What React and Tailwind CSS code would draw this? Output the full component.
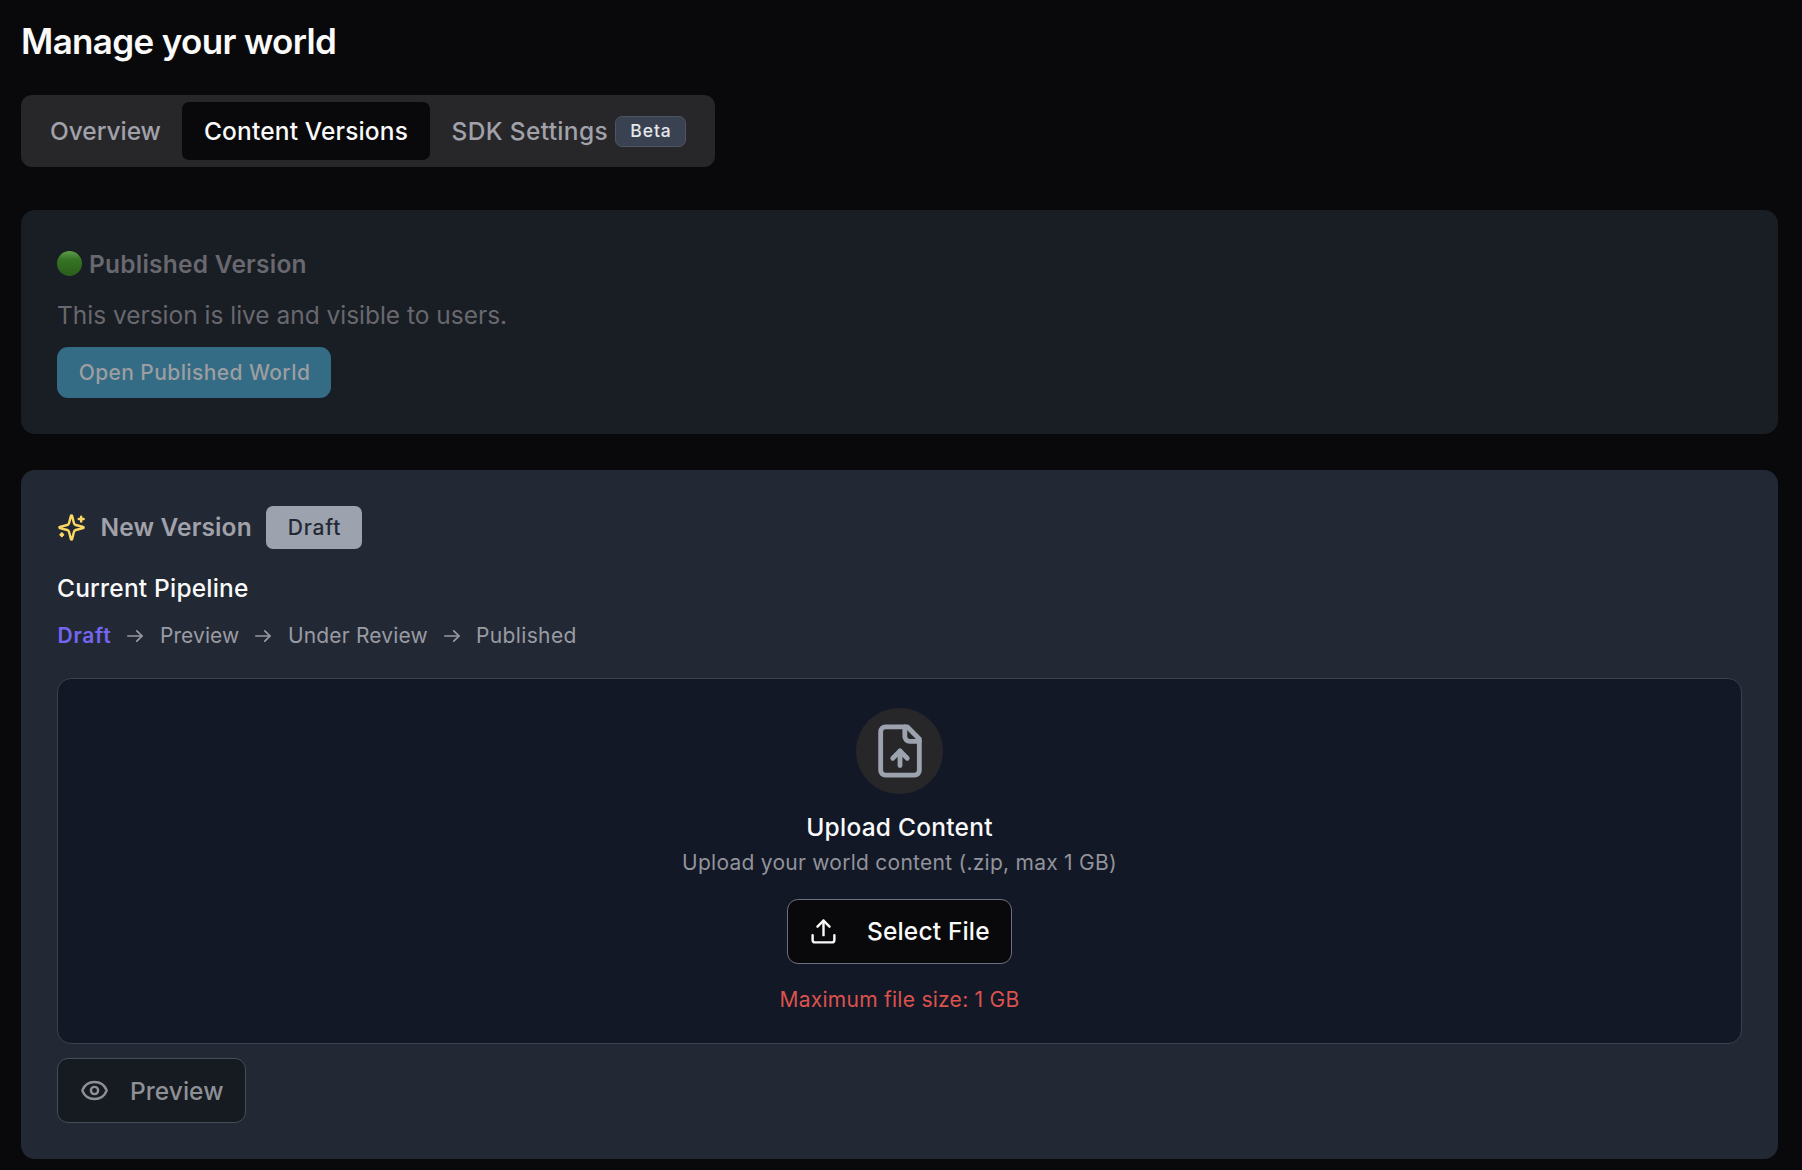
import React from "react";
import { Eye, Upload } from "lucide-react";

function SparklesIcon() {
  return (
    <svg className="h-[29px] w-[29px] text-[#fbd960]" viewBox="0 0 24 24" fill="none" stroke="currentColor" strokeWidth="2" strokeLinecap="round" strokeLinejoin="round">
      <path d="M9.937 15.5A2 2 0 0 0 8.5 14.063l-6.135-1.582a.5.5 0 0 1 0-.962L8.5 9.936A2 2 0 0 0 9.937 8.5l1.582-6.135a.5.5 0 0 1 .963 0L14.063 8.5A2 2 0 0 0 15.5 9.937l6.135 1.581a.5.5 0 0 1 0 .964L15.5 14.063a2 2 0 0 0-1.437 1.437l-1.582 6.135a.5.5 0 0 1-.963 0z" />
      <path d="M20 3v4" />
      <path d="M22 5h-4" />
      <path d="M4 17v2" />
      <path d="M5 18H3" />
    </svg>
  );
}

function FileUpIcon() {
  return (
    <svg className="h-[58px] w-[58px] text-[#9da2af]" viewBox="0 0 24 24" fill="none" stroke="currentColor" strokeWidth="2" strokeLinecap="round" strokeLinejoin="round">
      <path d="M15 2H6a2 2 0 0 0-2 2v16a2 2 0 0 0 2 2h12a2 2 0 0 0 2-2V7Z" />
      <path d="M14 2v4a2 2 0 0 0 2 2h4" />
      <path d="M12 12v6" />
      <path d="m15 15-3-3-3 3" />
    </svg>
  );
}

function StepArrow() {
  return (
    <svg className="mx-[17px] h-[14px] w-[16px] shrink-0" viewBox="0 0 16 14" fill="none" stroke="currentColor" strokeWidth="1.7" strokeLinecap="round" strokeLinejoin="round">
      <path d="M.9 7h14" />
      <path d="m9.8 1.8 5.2 5.2-5.2 5.2" />
    </svg>
  );
}

function Tabs() {
  return (
    <nav className="mt-8 flex h-[72px] w-[694px] rounded-[11px] bg-[#27272a] p-[7px] text-[24.5px] font-medium text-[#a1a1aa]">
      <button className="flex w-[154px] items-center pl-[22px] tracking-[-0.04px]">Overview</button>
      <button className="flex w-[248px] items-center rounded-[7px] bg-[#09090b] pl-[22px] tracking-[0.15px] text-[#fafafa]">Content Versions</button>
      <button className="flex w-[278px] items-center pl-[21.5px] tracking-[0.34px]">
        <span className="w-[163.5px] text-left">SDK Settings</span>
        <span className="flex h-[31px] w-[71px] items-center justify-center rounded-[7px] border border-[#4b5565] bg-[#3a4151] pl-px text-[17.5px] tracking-[0.9px] text-[#e5e7eb]">Beta</span>
      </button>
    </nav>
  );
}

function PublishedCard() {
  return (
    <section className="mt-[43px] h-[224px] rounded-[14px] bg-[#191d24] p-9 text-[#68686e]">
      <h2 className="flex h-9 items-center text-[24.5px] font-semibold tracking-[0.24px]">
        <span className="mr-[7px] mb-px h-[25px] w-[25px] rounded-full bg-linear-to-b from-[#5c9d4b] via-[#357323] via-35% to-[#2b5e1c]" />
        Published Version
      </h2>
      <p className="mt-[15px] text-[24.5px] leading-9 tracking-[-0.02px]">This version is live and visible to users.</p>
      <button className="mt-[14px] flex h-[51px] w-[274px] items-center justify-center rounded-[11px] bg-[#346b85] pl-px text-[21px] font-medium tracking-[0.4px] text-[#9d9ea1]">
        Open Published World
      </button>
    </section>
  );
}

function Pipeline() {
  return (
    <div className="mt-[15px] flex h-[29px] items-center text-[21px] text-[#9a9ba3]">
      <span className="ml-[0.5px] w-[52.5px] font-semibold tracking-[0.75px] text-[#7466f1]">Draft</span>
      <StepArrow />
      <span className="w-[78px] tracking-[0.07px]">Preview</span>
      <StepArrow />
      <span className="w-[139px] whitespace-nowrap tracking-[0.16px]">Under Review</span>
      <StepArrow />
      <span className="-ml-px tracking-[0.36px]">Published</span>
    </div>
  );
}

function Dropzone() {
  return (
    <div className="mt-7 flex h-[366px] flex-col items-center rounded-[14px] border border-[#3a414f] bg-[#121826] pt-[29px]">
      <div className="flex h-[86px] w-[87px] items-center justify-center rounded-full bg-[#27272a]">
        <FileUpIcon />
      </div>
      <h3 className="mt-[15px] text-[24.5px] leading-9 font-medium tracking-[0.24px] text-[#fafafa]">Upload Content</h3>
      <p className="mt-[3px] text-[21px] leading-[29px] tracking-[0.26px] text-[#92939b]">Upload your world content (.zip, max 1 GB)</p>
      <button className="mt-[22px] flex h-[65px] w-[225px] items-center rounded-[11px] border border-[#6b7180] bg-[#09090b] pl-[21px] text-[24.5px] font-medium tracking-[0.16px] text-[#fafafa]">
        <Upload className="mr-[29px] h-[29px] w-[29px]" strokeWidth={2} />
        Select File
      </button>
      <p className="mt-[21px] text-[21px] leading-[29px] tracking-[0.26px] text-[#dc524d]">Maximum file size: 1 GB</p>
    </div>
  );
}

function NewVersionCard() {
  return (
    <section className="mt-9 h-[689px] rounded-[14px] bg-[#222935] p-9">
      <div className="flex h-[43px] items-center">
        <SparklesIcon />
        <h2 className="ml-[14.5px] w-[165.5px] text-[24.5px] font-semibold tracking-[0.13px] text-[#a1a1aa]">New Version</h2>
        <span className="flex h-[43px] w-[96px] items-center justify-center rounded-[7px] bg-[#9da2af] pl-px text-[21px] font-medium tracking-[0.8px] text-[#222935]">Draft</span>
      </div>
      <h3 className="mt-[21px] text-[24.5px] leading-9 font-medium tracking-[0.2px] text-[#fafafa]">Current Pipeline</h3>
      <Pipeline />
      <Dropzone />
      <button className="mt-[14px] flex h-[65px] w-[189px] items-center rounded-[11px] border border-[#464d5a] bg-[#161a21] pl-[22px] text-[24.5px] font-medium tracking-[0.04px] text-[#8e9096]">
        <Eye className="mr-[21px] h-[29px] w-[29px]" strokeWidth={2} />
        <span className="pt-[2px]">Preview</span>
      </button>
    </section>
  );
}

export default function App() {
  return (
    <main className="h-[1170px] w-[1802px] overflow-hidden bg-[#09090b] pt-5 pr-6 pl-[21px] font-['Inter',sans-serif]">
      <h1 className="text-[35px] leading-[43px] font-semibold tracking-[-0.65px] text-[#fafafa]">Manage your world</h1>
      <Tabs />
      <PublishedCard />
      <NewVersionCard />
    </main>
  );
}
